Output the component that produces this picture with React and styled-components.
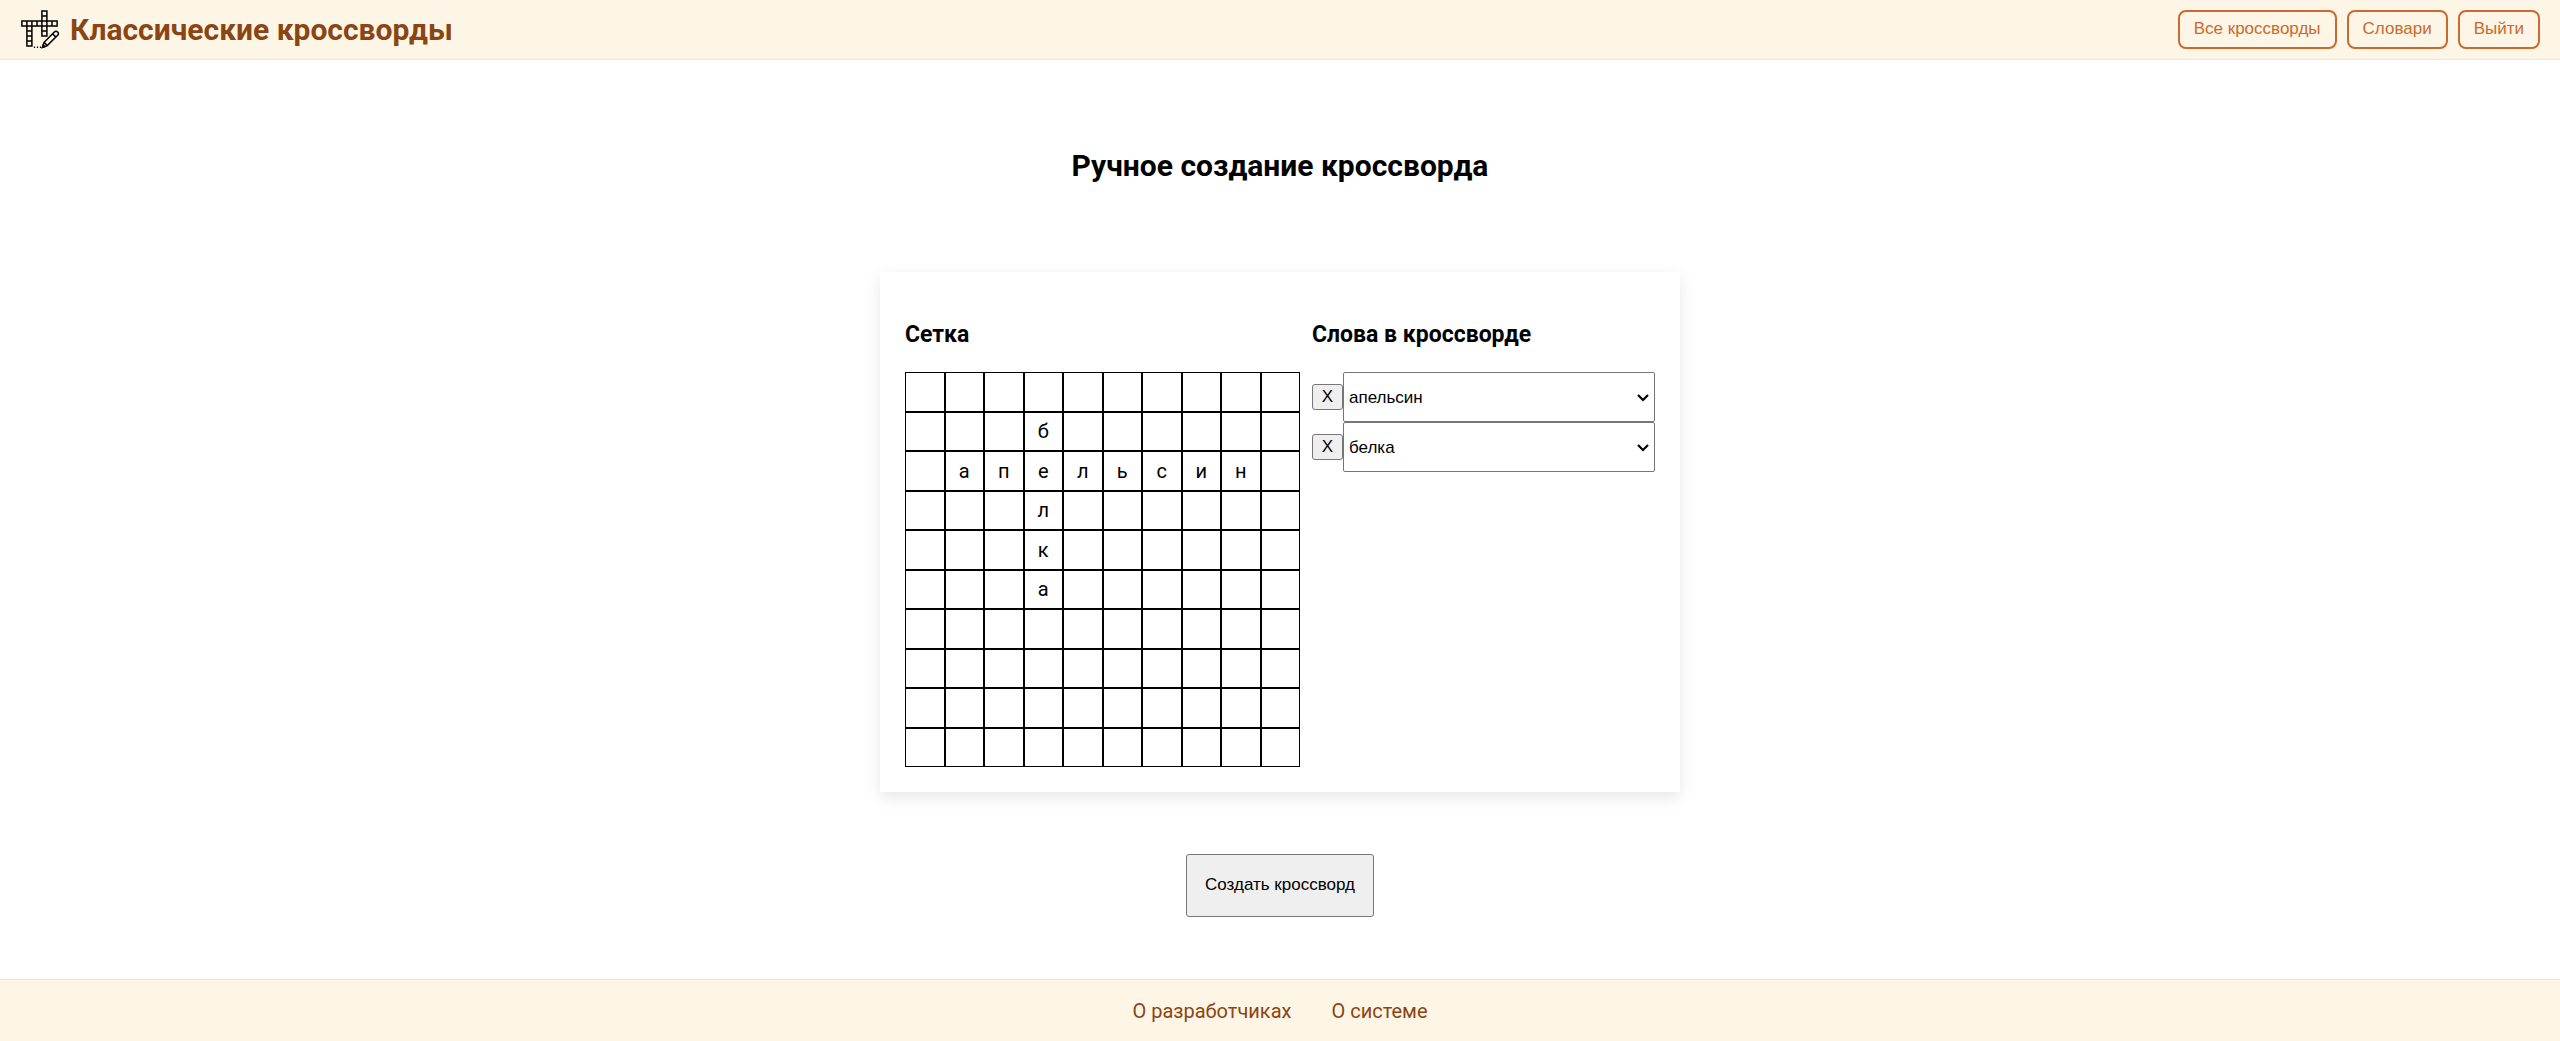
import React, { useState } from "react";
import styled, { createGlobalStyle } from "styled-components";

const GlobalStyle = createGlobalStyle`
  *, *::before, *::after { box-sizing: border-box; }
  body {
    margin: 0;
    background: #fff;
    color: #000;
    font-family: Roboto, "Noto Sans", sans-serif;
    font-size: 20px;
  }
`;

const Page = styled.div`
  min-height: 100vh;
  display: flex;
  flex-direction: column;
`;

const Header = styled.header`
  display: flex;
  align-items: center;
  justify-content: space-between;
  padding: 10px 20px;
  background: #fdf5e6;
  border-bottom: 1px solid #e7e7e7;
`;

const Brand = styled.div`
  display: flex;
  align-items: center;
  gap: 10px;
`;

const Logo = styled.svg`
  width: 40px;
  height: 39px;
  flex: none;
`;

const BrandName = styled.span`
  color: #8b4513;
  font-size: 30px;
  line-height: 36px;
  font-weight: 700;
`;

const Nav = styled.nav`
  display: flex;
  gap: 10px;
`;

const NavButton = styled.button`
  height: 39px;
  padding: 0 14px 1px;
  border: 2px solid #c86b2c;
  border-radius: 8px;
  background: transparent;
  color: #c86b2c;
  font-family: "Liberation Sans", Arial, sans-serif;
  font-size: 17px;
  cursor: pointer;
`;

const Main = styled.main`
  flex: 1;
  display: flex;
  flex-direction: column;
  align-items: center;
  justify-content: space-between;
  padding: 62px 20px;
`;

const PageTitle = styled.h1`
  margin: 26px 0;
  font-size: 30px;
  line-height: 36px;
  font-weight: 700;
`;

const Card = styled.section`
  display: flex;
  gap: 12px;
  width: 100%;
  max-width: 800px;
  padding: 25px;
  background: #fff;
  box-shadow: 0 5px 15px rgba(0, 0, 0, 0.1);
`;

const GridColumn = styled.div`
  flex: 0 1 395px;
`;

const WordsColumn = styled.div`
  flex: 1;
`;

const ColumnTitle = styled.h2`
  margin: 23px 0;
  font-size: 23px;
  line-height: 29px;
  font-weight: 700;
`;

const Board = styled.div`
  display: grid;
  grid-template-columns: repeat(10, 1fr);
`;

const Cell = styled.div`
  display: flex;
  align-items: center;
  justify-content: center;
  aspect-ratio: 1;
  border: 1px solid #000;
  line-height: 24px;
`;

const WordList = styled.ul`
  margin: 0;
  padding: 0;
  list-style: none;
`;

const WordRow = styled.li`
  display: flex;
  align-items: center;
`;

const RemoveButton = styled.button`
  width: 31px;
  height: 26px;
  padding: 0;
  border: 1px solid #767676;
  border-radius: 3px;
  background: #efefef;
  color: #000;
  font-family: "Liberation Sans", Arial, sans-serif;
  font-size: 17px;
`;

const SelectBox = styled.div`
  position: relative;
  flex: 1;
  display: flex;
`;

const WordSelect = styled.select`
  flex: 1;
  height: 50px;
  padding: 0 24px 0 5px;
  appearance: none;
  border: 1px solid #767676;
  border-radius: 2px;
  background: #fff;
  color: #000;
  font-family: "Liberation Sans", Arial, sans-serif;
  font-size: 17px;
`;

const Chevron = styled.svg`
  position: absolute;
  top: 21px;
  right: 6px;
  width: 12px;
  height: 9px;
  pointer-events: none;
`;

const CreateButton = styled.button`
  height: 63px;
  padding: 0 18px 1px;
  border: 1px solid #767676;
  border-radius: 3px;
  background: #efefef;
  color: #000;
  font-family: "Liberation Sans", Arial, sans-serif;
  font-size: 17px;
`;

const Footer = styled.footer`
  display: flex;
  justify-content: center;
  gap: 40px;
  padding: 21px 20px 19px;
  background: #fdf5e6;
  border-top: 1px solid #e7e7e7;
`;

const FooterLink = styled.a`
  color: #8b4513;
  line-height: 21px;
  text-decoration: none;
`;

const SIZE = 10;
const WORDS = [
  { text: "апельсин", row: 2, col: 1, down: false },
  { text: "белка", row: 1, col: 3, down: true },
];

function buildCells(words) {
  const cells = Array(SIZE * SIZE).fill("");
  words.forEach(({ text, row, col, down }) => {
    [...text].forEach((letter, i) => {
      const r = down ? row + i : row;
      const c = down ? col : col + i;
      cells[r * SIZE + c] = letter;
    });
  });
  return cells;
}

function CrosswordLogo() {
  return (
    <Logo viewBox="0 0 40 39" fill="none" stroke="#000" strokeWidth="1.5" aria-hidden="true">
      <path d="M1.9 11.1h35.2v4.9H1.9z" />
      <path d="M6.9 11.1v25h5v-25M6.9 21h5M6.9 26h5M6.9 31h5" />
      <path d="M21.9 1v25h5V1zM21.9 6h5M21.9 21h5M17 11.1V16M32 11.1V16" />
      <path d="M22.6 37.2l1.5-4.9L34.6 21.8c2-1.6 4.9 1.1 3.3 3.3L27.3 35.6zM24.1 32.3l3.2 3.3M32.6 23.8l3.3 3.3" />
      <path d="M22.4 37.4l.8-2.4 1.5 1.7z" fill="#000" />
      <path d="M13.9 37.2h1.2M16.9 37.2h1.2M19.9 37.2h1.2" />
    </Logo>
  );
}

export default function App() {
  const [words, setWords] = useState(WORDS);
  const change = (index, text) =>
    setWords(words.map((w, i) => (i === index ? { ...w, text } : w)));

  return (
    <Page>
      <GlobalStyle />
      <Header>
        <Brand>
          <CrosswordLogo />
          <BrandName>Классические кроссворды</BrandName>
        </Brand>
        <Nav>
          <NavButton type="button">Все кроссворды</NavButton>
          <NavButton type="button">Словари</NavButton>
          <NavButton type="button">Выйти</NavButton>
        </Nav>
      </Header>
      <Main>
        <PageTitle>Ручное создание кроссворда</PageTitle>
        <Card>
          <GridColumn>
            <ColumnTitle>Сетка</ColumnTitle>
            <Board>
              {buildCells(words).map((letter, i) => (
                <Cell key={i}>{letter}</Cell>
              ))}
            </Board>
          </GridColumn>
          <WordsColumn>
            <ColumnTitle>Слова в кроссворде</ColumnTitle>
            <WordList>
              {words.map((word, i) => (
                <WordRow key={i}>
                  <RemoveButton
                    type="button"
                    aria-label={`X, удалить слово ${word.text}`}
                    onClick={() => setWords(words.filter((_, n) => n !== i))}
                  >
                    X
                  </RemoveButton>
                  <SelectBox>
                    <WordSelect
                      aria-label={`Слово ${i + 1}`}
                      value={word.text}
                      onChange={(e) => change(i, e.target.value)}
                    >
                      <option>{word.text}</option>
                    </WordSelect>
                    <Chevron viewBox="0 0 12 9" fill="none" stroke="#000" strokeWidth="2.2" aria-hidden="true">
                      <path d="M1 2l5 5 5-5" />
                    </Chevron>
                  </SelectBox>
                </WordRow>
              ))}
            </WordList>
          </WordsColumn>
        </Card>
        <CreateButton type="button">Создать кроссворд</CreateButton>
      </Main>
      <Footer>
        <FooterLink href="#developers">О разработчиках</FooterLink>
        <FooterLink href="#system">О системе</FooterLink>
      </Footer>
    </Page>
  );
}
